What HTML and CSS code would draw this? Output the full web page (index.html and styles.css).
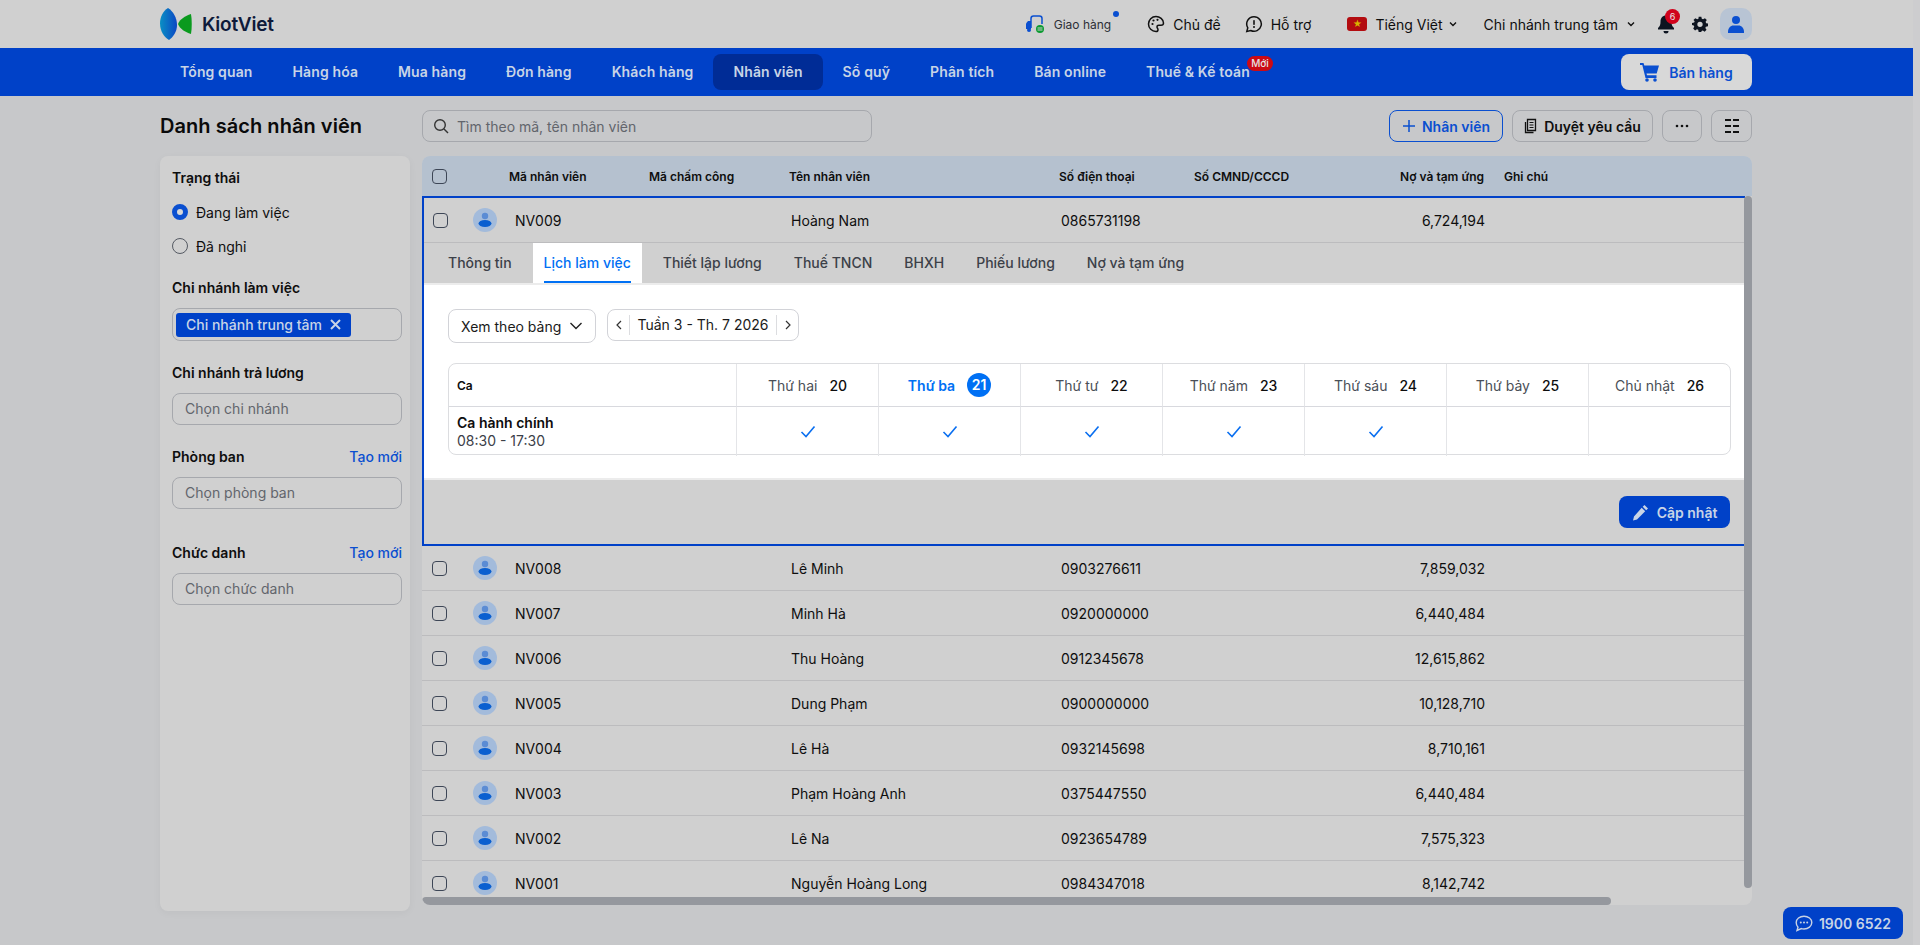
FILE: index.html
```html
<!DOCTYPE html>
<html lang="vi">
<head>
    <meta charset="UTF-8">
    <title>Danh sách nhân viên</title>
    <link rel="stylesheet" href="styles.css">
</head>
<body>
<div class="page">
    <header class="topbar">
        <div class="wrap topbar-inner">
            <a class="logo">
                <svg width="33" height="32" viewBox="0 0 33 32">
                    <defs><linearGradient id="lg" x1="0" x2="1" y1="0" y2="0"><stop offset="0" stop-color="#0a8fc4"/><stop offset="1" stop-color="#0b47c4"/></linearGradient></defs>
                    <path d="M8 0C3 3 0 9 0 15.500C0 23 4 29 9 32C13 29 17 24 17 17C17 10 13 3 8 0Z" fill="url(#lg)"/>
                    <path d="M18 16C20 11 25 8 31 6C32 12 32 20 31 26C25 24 20 21 18 16Z" fill="#0a9a1e"/>
                </svg>
                <span class="logo-text">KiotViet</span>
            </a>
            <div class="top-actions">
                <a class="top-link delivery">
                    <svg width="20" height="20" viewBox="0 0 20 20" fill="none"><path d="M6 14V4.500A2.500 2.500 0 0 1 8.500 2h6A2.500 2.500 0 0 1 17 4.500V10" stroke="#0a4fd0" stroke-width="1.500"/><path d="M1 15V9.500L3 7h3v8H1Z" fill="#0a4fd0"/><circle cx="4" cy="16" r="2" fill="#0a4fd0"/><circle cx="15" cy="15" r="4" fill="#0a9a30"/><rect x="12.500" y="13.500" width="5" height="1" fill="#d0d0d0"/><rect x="12.500" y="15.500" width="5" height="1" fill="#d0d0d0"/></svg>
                    <span>Giao hàng</span><i class="dot"></i>
                </a>
                <a class="top-link theme">
                    <svg width="18" height="18" viewBox="0 0 18 18" fill="none"><path d="M9 1.500C4.800 1.500 1.500 4.800 1.500 9S4.800 16.500 9 16.500c1.300 0 2-.8 2-1.800 0-1.300-1-1.500-1-2.700 0-1 .8-1.700 1.800-1.700h2.200c1.500 0 2.500-1 2.500-2.300 0-3.600-3.800-6.500-7.500-6.500Z" stroke="#111" stroke-width="1.500"/><circle cx="5.500" cy="9" r="1.100" fill="#111"/><circle cx="6.500" cy="5.500" r="1.100" fill="#111"/><circle cx="10.500" cy="4.800" r="1.100" fill="#111"/></svg>
                    <span>Chủ đề</span>
                </a>
                <a class="top-link support">
                    <svg width="18" height="18" viewBox="0 0 18 18" fill="none"><path d="M9 1.700a7.300 7.300 0 1 1-3.300 13.800L1.800 16.400l1-3.600A7.300 7.300 0 0 1 9 1.700Z" stroke="#111" stroke-width="1.500"/><rect x="8.200" y="5" width="1.600" height="5" rx=".8" fill="#111"/><circle cx="9" cy="12" r="1" fill="#111"/></svg>
                    <span>Hỗ trợ</span>
                </a>
                <a class="top-link lang">
                    <span class="flag">★</span>
                    <span>Tiếng Việt</span>
                    <svg class="caret" width="8" height="6" viewBox="0 0 8 6" fill="none"><path d="M1 1.500l3 3 3-3" stroke="#111" stroke-width="1.400"/></svg>
                </a>
                <a class="top-link branch">
                    <span>Chi nhánh trung tâm</span>
                    <svg class="caret" width="8" height="6" viewBox="0 0 8 6" fill="none"><path d="M1 1.500l3 3 3-3" stroke="#111" stroke-width="1.400"/></svg>
                </a>
                <a class="bell">
                    <svg width="20" height="22" viewBox="0 0 20 22"><path d="M10 2.500c-3.500 0-5.500 2.700-5.500 6 0 3.500-.7 5-2.500 6.500v1.500h16V15c-1.800-1.500-2.500-3-2.500-6.500 0-3.300-2-6-5.500-6Z" fill="#0d1420"/><path d="M7.500 18h5a2.500 2.500 0 0 1-5 0Z" fill="#0d1420"/></svg>
                    <span class="bell-count">6</span>
                </a>
                <a class="gear">
                    <svg width="16" height="16" viewBox="0 0 24 24"><path fill-rule="evenodd" d="M10 1h4l.7 3.200 1.900.8L19.400 3.200l2.800 2.800-1.800 2.800.8 1.900L24 11.400v4l-3.200.7-.8 1.900 1.800 2.800-2.800 2.800-2.800-1.800-1.900.8L14 24h-4l-.7-3.400-1.900-.8-2.800 1.800-2.800-2.800L3.400 16l-.8-1.900L0 13.400v-3l3.200-.7.800-1.900L2.200 6 5 3.200 7.800 5l1.900-.8L10 1Zm2 7.500a4 4 0 1 0 0 8 4 4 0 0 0 0-8Z" fill="#0d1420"/></svg>
                </a>
                <a class="user-btn">
                    <svg width="16" height="18" viewBox="0 0 16 18"><circle cx="8" cy="5" r="4" fill="#0a4fd0"/><path d="M0 17c0-4 2.500-6.500 5.500-6.500h5c3 0 5.500 2.500 5.500 6.500v1H0v-1Z" fill="#0a4fd0"/></svg>
                </a>
            </div>
        </div>
    </header>

    <nav class="mainnav">
        <div class="wrap mainnav-inner">
            <div class="nav-items">
                <a class="nav-item">Tổng quan</a>
                <a class="nav-item">Hàng hóa</a>
                <a class="nav-item">Mua hàng</a>
                <a class="nav-item">Đơn hàng</a>
                <a class="nav-item">Khách hàng</a>
                <a class="nav-item active">Nhân viên</a>
                <a class="nav-item">Sổ quỹ</a>
                <a class="nav-item">Phân tích</a>
                <a class="nav-item">Bán online</a>
                <a class="nav-item">Thuế &amp; Kế toán<span class="new-badge">Mới</span></a>
            </div>
            <a class="sell-btn">
                <svg width="20" height="20" viewBox="0 0 20 20"><path d="M0 1h3.500l.8 2.500H19l-2.300 8H6.500l.5 1.800h9.500V16H5.500L2.300 3H0V1Z" fill="#0a4fd0"/><circle cx="7" cy="18" r="1.800" fill="#0a4fd0"/><circle cx="15" cy="18" r="1.800" fill="#0a4fd0"/></svg>
                Bán hàng
            </a>
        </div>
    </nav>

    <main class="wrap content">
        <div class="toolbar">
            <h1 class="page-title">Danh sách nhân viên</h1>
            <div class="search">
                <svg width="16" height="16" viewBox="0 0 16 16" fill="none"><circle cx="7" cy="7" r="5.300" stroke="#333" stroke-width="1.400"/><path d="M11 11l4 4" stroke="#333" stroke-width="1.400"/></svg>
                <span>Tìm theo mã, tên nhân viên</span>
            </div>
            <div class="toolbar-actions">
                <a class="btn btn-outline">
                    <svg width="14" height="14" viewBox="0 0 14 14"><path d="M7 1v12M1 7h12" stroke="#0a4fd0" stroke-width="1.500"/></svg>
                    Nhân viên
                </a>
                <a class="btn btn-request">
                    <svg width="14" height="16" viewBox="0 0 14 16" fill="none"><path d="M3.500 1.500h8v11h-8z" stroke="#111" stroke-width="1.300"/><path d="M1.500 4v10.500h8" stroke="#111" stroke-width="1.300"/><path d="M5.500 4.500h4M5.500 7h4M5.500 9.500h4" stroke="#111" stroke-width="1.100"/></svg>
                    Duyệt yêu cầu
                </a>
                <a class="btn btn-more">
                    <svg width="14" height="4" viewBox="0 0 14 4"><circle cx="2" cy="2" r="1.300" fill="#111"/><circle cx="7" cy="2" r="1.300" fill="#111"/><circle cx="12" cy="2" r="1.300" fill="#111"/></svg>
                </a>
                <a class="btn btn-cols">
                    <svg width="16" height="14" viewBox="0 0 16 14"><path d="M1 0h6v2H1zM9 0h6v2H9zM1 6h6v2H1zM9 6h6v2H9zM1 12h6v2H1zM9 12h6v2H9z" fill="#111"/></svg>
                </a>
            </div>
        </div>

        <div class="columns">
            <aside class="filters">
                <div class="filter-title">Trạng thái</div>
                <div class="radio-row"><i class="radio checked"></i>Đang làm việc</div>
                <div class="radio-row"><i class="radio"></i>Đã nghỉ</div>

                <div class="filter-title gap-first">Chi nhánh làm việc</div>
                <div class="field field-tags">
                    <span class="tag">Chi nhánh trung tâm
                        <svg width="11" height="11" viewBox="0 0 11 11"><path d="M1 1l9 9M10 1L1 10" stroke="#c8d4e6" stroke-width="2"/></svg>
                    </span>
                </div>

                <div class="filter-title gap-next">Chi nhánh trả lương</div>
                <div class="field">Chọn chi nhánh</div>

                <div class="filter-title gap-next">Phòng ban<a class="create-link">Tạo mới</a></div>
                <div class="field">Chọn phòng ban</div>

                <div class="filter-title gap-last">Chức danh<a class="create-link">Tạo mới</a></div>
                <div class="field">Chọn chức danh</div>
            </aside>

            <section class="table">
                <div class="thead">
                    <span class="cb-cell"><i class="checkbox"></i></span>
                    <span>Mã nhân viên</span>
                    <span>Mã chấm công</span>
                    <span>Tên nhân viên</span>
                    <span>Số điện thoại</span>
                    <span>Số CMND/CCCD</span>
                    <span class="num">Nợ và tạm ứng</span>
                    <span class="note">Ghi chú</span>
                </div>

                <div class="selected">
                    <div class="row open" id="openRow"></div>
                    <div class="tabs">
                        <a class="tab">Thông tin</a>
                        <a class="tab active">Lịch làm việc</a>
                        <a class="tab">Thiết lập lương</a>
                        <a class="tab">Thuế TNCN</a>
                        <a class="tab">BHXH</a>
                        <a class="tab">Phiếu lương</a>
                        <a class="tab">Nợ và tạm ứng</a>
                    </div>
                    <div class="tab-panel">
                        <div class="schedule-tools">
                            <div class="view-select">Xem theo bảng
                                <svg width="14" height="8" viewBox="0 0 14 8" fill="none"><path d="M1.500 1l5.500 5.500L12.500 1" stroke="#222" stroke-width="1.400"/></svg>
                            </div>
                            <div class="week">
                                <span class="week-arrow"><svg width="6" height="10" viewBox="0 0 6 10" fill="none"><path d="M5 1L1 5l4 4" stroke="#333" stroke-width="1.200"/></svg></span>
                                <span class="week-label">Tuần 3 - Th. 7 2026</span>
                                <span class="week-arrow"><svg width="6" height="10" viewBox="0 0 6 10" fill="none"><path d="M1 1l4 4-4 4" stroke="#333" stroke-width="1.200"/></svg></span>
                            </div>
                        </div>
                        <div class="schedule" id="schedule"></div>
                    </div>
                    <div class="panel-foot">
                        <a class="save-btn">
                            <svg width="17" height="17" viewBox="0 0 17 17"><path d="M12.500 1l3.500 3.500-1.800 1.800-3.500-3.500L12.500 1ZM9.700 3.800l3.500 3.500L5 15.500 1 16.500l1-4 7.700-8.700Z" fill="#c8d4e6"/></svg>
                            Cập nhật
                        </a>
                    </div>
                </div>

                <div id="rows"></div>

                <i class="scroll-v"></i>
                <i class="scroll-h"></i>
            </section>
        </div>
    </main>

    <a class="hotline">
        <svg width="18" height="17" viewBox="0 0 18 17" fill="none"><path d="M9 1.200c4.300 0 7.800 2.800 7.800 6.400S13.300 14 9 14c-.9 0-1.800-.1-2.600-.4L2 15.500l1-3.300C1.900 11 1.200 9.400 1.200 7.600 1.200 4 4.700 1.200 9 1.200Z" stroke="#c8d2e4" stroke-width="1.400"/><circle cx="5.800" cy="7.600" r="1" fill="#c8d2e4"/><circle cx="9" cy="7.600" r="1" fill="#c8d2e4"/><circle cx="12.200" cy="7.600" r="1" fill="#c8d2e4"/></svg>
        1900 6522
    </a>
</div>

<script src="app.js"></script>
</body>
</html>
```

FILE: app.js
```js
const employees = [
    ['NV008', 'Lê Minh', '0903276611', '7,859,032'],
    ['NV007', 'Minh Hà', '0920000000', '6,440,484'],
    ['NV006', 'Thu Hoàng', '0912345678', '12,615,862'],
    ['NV005', 'Dung Phạm', '0900000000', '10,128,710'],
    ['NV004', 'Lê Hà', '0932145698', '8,710,161'],
    ['NV003', 'Phạm Hoàng Anh', '0375447550', '6,440,484'],
    ['NV002', 'Lê Na', '0923654789', '7,575,323'],
    ['NV001', 'Nguyễn Hoàng Long', '0984347018', '8,142,742']
];

const days = [
    ['Thứ hai', 20, true],
    ['Thứ ba', 21, true],
    ['Thứ tư', 22, true],
    ['Thứ năm', 23, true],
    ['Thứ sáu', 24, true],
    ['Thứ bảy', 25, false],
    ['Chủ nhật', 26, false]
];

const avatar = `<svg class="avatar" width="24" height="24" viewBox="0 0 24 24"><circle cx="12" cy="12" r="12" fill="#a3bbdb"/><circle cx="12" cy="8" r="3.200" fill="#5b8cd4"/><ellipse cx="12" cy="15.500" rx="6.500" ry="3.500" fill="#0a5fd0"/></svg>`;
const check = `<svg width="16" height="13" viewBox="0 0 16 13" fill="none"><path d="M1.500 7l4.500 4.500L14.500 1.500" stroke="#0a6ff0" stroke-width="1.600"/></svg>`;

function rowCells(e) {
    return `<span class="cb-cell"><i class="checkbox"></i></span>
        <span>${avatar}</span>
        <span>${e[0]}</span>
        <span></span>
        <span>${e[1]}</span>
        <span>${e[2]}</span>
        <span></span>
        <span class="num">${e[3]}</span>`;
}

document.getElementById('openRow').innerHTML = rowCells(['NV009', 'Hoàng Nam', '0865731198', '6,724,194']);

document.getElementById('rows').innerHTML = employees
    .map(e => `<div class="row">${rowCells(e)}</div>`)
    .join('');

let head = '<div class="sch-cell sch-ca">Ca</div>';
let body = '<div class="sch-cell sch-shift"><b>Ca hành chính</b><span>08:30 - 17:30</span></div>';
days.forEach(d => {
    const today = d[1] === 21 ? ' today' : '';
    head += `<div class="sch-cell sch-day${today}"><span class="day-name">${d[0]}</span><span class="day-num">${d[1]}</span></div>`;
    body += `<div class="sch-cell sch-mark">${d[2] ? check : ''}</div>`;
});
document.getElementById('schedule').innerHTML = head + body;
```

FILE: styles.css
```css
* {
    box-sizing: border-box;
}
html, body {
    height: 100%;
    margin: 0;
    overflow: hidden;
}
body {
    font-family: Inter, "Noto Sans", sans-serif;
    font-size: 14px;
    color: #0e0e0e;
    background-color: #cdcdcf;
}
a {
    color: inherit;
    text-decoration: none;
}
i {
    display: block;
}
.page {
    position: relative;
    width: 1913px;
    height: 945px;
    background-color: #c7c8ca;
}
.wrap {
    width: 1592px;
    margin-left: 160px;
}

/* top bar */
.topbar {
    height: 48px;
    background-color: #d0d0d0;
}
.topbar-inner {
    display: flex;
    align-items: center;
    justify-content: space-between;
    height: 48px;
}
.logo {
    display: flex;
    align-items: center;
    gap: 9px;
}
.logo-text {
    font-size: 19px;
    font-weight: 600;
    color: #0e1a3a;
    letter-spacing: -0.2px;
}
.top-actions {
    display: flex;
    align-items: center;
    height: 48px;
}
.top-link {
    display: flex;
    align-items: center;
    gap: 8px;
}
.delivery {
    position: relative;
    gap: 9px;
    font-size: 12px;
    color: #2c2f36;
    margin-right: 36px;
}
.delivery .dot {
    position: absolute;
    right: -8px;
    top: -3px;
    width: 6px;
    height: 6px;
    border-radius: 50%;
    background-color: #0a4fd0;
}
.theme {
    margin-right: 24px;
}
.support {
    margin-right: 36px;
}
.flag {
    width: 20px;
    height: 14px;
    border-radius: 3px;
    background-color: #b30c10;
    color: #d8b400;
    font-size: 9px;
    line-height: 14px;
    text-align: center;
}
.lang {
    margin-right: 27px;
}
.lang .caret {
    margin-left: -2px;
}
.branch .caret {
    margin-left: 1px;
}
.branch {
    margin-right: 21px;
}
.bell {
    position: relative;
    display: flex;
    margin-right: 16px;
}
.bell-count {
    position: absolute;
    left: 9px;
    top: -4px;
    width: 15px;
    height: 15px;
    border-radius: 50%;
    background-color: #d0021b;
    color: #e8e8e8;
    font-size: 9px;
    line-height: 15px;
    text-align: center;
}
.gear {
    display: flex;
    margin-right: 12px;
}
.user-btn {
    display: flex;
    align-items: center;
    justify-content: center;
    width: 32px;
    height: 32px;
    border-radius: 10px;
    background-color: #b8c4d4;
}

/* main nav */
.mainnav {
    height: 48px;
    background-color: #0041c8;
}
.mainnav-inner {
    display: flex;
    align-items: center;
    justify-content: space-between;
    height: 48px;
}
.nav-items {
    display: flex;
}
.nav-item {
    position: relative;
    height: 36px;
    padding: 0 20px;
    border-radius: 8px;
    font-weight: 600;
    line-height: 36px;
    letter-spacing: 0.12px;
    color: #c8d4e6;
}
.nav-item.active {
    background-color: #002c96;
}
.new-badge {
    position: absolute;
    right: -3px;
    top: 2px;
    height: 15px;
    padding: 0 4px;
    border-radius: 8px;
    background-color: #cc0a14;
    color: #e4e4e4;
    font-size: 10px;
    font-weight: 500;
    line-height: 15px;
    letter-spacing: 0;
}
.sell-btn {
    display: flex;
    align-items: center;
    justify-content: center;
    gap: 9px;
    width: 131px;
    height: 36px;
    border-radius: 8px;
    background-color: #d8d8d8;
    color: #0a4fd0;
    font-weight: 600;
}

/* toolbar */
.toolbar {
    display: flex;
    align-items: center;
    height: 32px;
    margin-top: 14px;
}
.page-title {
    width: 262px;
    margin: 0;
    font-size: 20px;
    font-weight: 600;
    letter-spacing: 0.05px;
    color: #0a0a0a;
}
.search {
    display: flex;
    align-items: center;
    gap: 8px;
    width: 450px;
    height: 32px;
    padding: 0 10px;
    border: 1px solid #a6a8ad;
    border-radius: 8px;
    color: #62656c;
}
.toolbar-actions {
    display: flex;
    gap: 9px;
    margin-left: auto;
}
.btn {
    display: flex;
    align-items: center;
    justify-content: center;
    gap: 6px;
    height: 32px;
    border: 1px solid #a6a8ad;
    border-radius: 8px;
    font-weight: 600;
}
.btn-outline {
    width: 114px;
    border-color: #0a4fd0;
    color: #0a4fd0;
}
.btn-request {
    width: 141px;
}
.btn-more {
    width: 40px;
}
.btn-cols {
    width: 41px;
}

/* filters + table */
.columns {
    display: flex;
    gap: 12px;
    margin-top: 14px;
    align-items: flex-start;
}
.filters {
    width: 250px;
    height: 755px;
    padding: 12px 8px 12px 12px;
    border-radius: 8px;
    background-color: #d0d0d0;
    box-shadow: 0 2px 8px rgba(0,0,0,0.04);
}
.filter-title {
    display: flex;
    justify-content: space-between;
    height: 20px;
    font-weight: 600;
    line-height: 20px;
}
.gap-first {
    margin-top: 15px;
}
.gap-next {
    margin-top: 22px;
}
.gap-last {
    margin-top: 34px;
}
.create-link {
    color: #0a4fd0;
    font-weight: 500;
}
.radio-row {
    display: flex;
    align-items: center;
    gap: 8px;
    height: 34px;
}
.filter-title + .radio-row {
    margin-top: 7px;
}
.radio {
    width: 16px;
    height: 16px;
    border: 1.500px solid #555a63;
    border-radius: 50%;
}
.radio.checked {
    border: 5px solid #0a4fd0;
    background-color: #d8d8d8;
}
.field {
    height: 32px;
    margin-top: 10px;
    padding: 0 12px;
    border: 1px solid #a6a8ad;
    border-radius: 8px;
    color: #62656c;
    line-height: 30px;
}
.field-tags {
    display: flex;
    align-items: center;
    height: 33px;
    padding: 0 3px;
}
.tag {
    display: flex;
    align-items: center;
    gap: 8px;
    height: 24px;
    padding: 0 10px;
    border-radius: 3px;
    background-color: #0041c8;
    color: #c8d4e6;
    font-weight: 500;
}
.table {
    position: relative;
    width: 1330px;
    height: 749px;
    overflow: hidden;
    border-radius: 8px;
    background-color: #d0d0d0;
}
.thead {
    display: grid;
    grid-template-columns: 87px 140px 140px 270px 135px 140px 150px 20px auto;
    align-items: center;
    height: 40px;
    background-color: #b5c1cf;
    font-size: 12px;
    font-weight: 600;
}
.thead .note {
    grid-column: 9;
}
.cb-cell {
    padding-left: 10px;
}
.checkbox {
    width: 15px;
    height: 15px;
    border: 1.300px solid #3d4656;
    border-radius: 4px;
}
.num {
    text-align: right;
}
.row {
    display: grid;
    grid-template-columns: 51px 42px 134px 142px 270px 135px 140px 149px;
    align-items: center;
    height: 45px;
    border-bottom: 1px solid #bcbcbe;
    width: 1322px;
}
.row .avatar {
    display: block;
}
.selected {
    width: 1323px;
    height: 350px;
    border-top: 2px solid #0041c8;
    border-bottom: 2px solid #0041c8;
    border-left: 2px solid #0041c8;
}
.row.open {
    grid-template-columns: 49px 42px 134px 142px 270px 135px 140px 149px;
    height: 45px;
    width: auto;
}
.row.open .cb-cell {
    padding-left: 9px;
}
.tabs {
    display: flex;
    gap: 10px;
    height: 40px;
    padding-left: 13px;
}
.tab {
    padding: 0 11px;
    color: #3c4048;
    font-weight: 500;
    line-height: 40px;
}
.tab.active {
    position: relative;
    background-color: #fff;
    color: #0070f4;
}
.tab.active::after {
    content: "";
    position: absolute;
    left: 11px;
    right: 11px;
    bottom: 0;
    height: 2px;
    background-color: #0070f4;
}
.tab-panel {
    height: 197px;
    padding: 24px 15px 0 24px;
    border-top: 2px solid #ececec;
    border-bottom: 2px solid #ececec;
    background-color: #fff;
}
.schedule-tools {
    display: flex;
    gap: 11px;
    align-items: flex-start;
    height: 54px;
}
.view-select {
    display: flex;
    align-items: center;
    justify-content: space-between;
    width: 148px;
    height: 34px;
    padding: 0 12px;
    border: 1px solid #d2d3d8;
    border-radius: 8px;
    color: #1a1a1a;
}
.week {
    display: flex;
    align-items: center;
    width: 192px;
    height: 32px;
    border: 1px solid #d2d3d8;
    border-radius: 8px;
}
.week-arrow {
    display: flex;
    align-items: center;
    justify-content: center;
    width: 21px;
    height: 20px;
}
.week-label {
    flex: 1;
    height: 20px;
    border-left: 1px solid #dcdde0;
    border-right: 1px solid #dcdde0;
    color: #1a1a1a;
    line-height: 20px;
    text-align: center;
}
.schedule {
    display: grid;
    grid-template-columns: 287px repeat(7, 142px);
    grid-template-rows: 43px 49px;
    width: 1283px;
    height: 92px;
    border: 1px solid #dcdde0;
    border-radius: 8px;
}
.sch-cell {
    display: flex;
    align-items: center;
    justify-content: center;
    border-left: 1px solid #e4e5e8;
}
.sch-ca, .sch-shift {
    border-left: none;
    padding-left: 8px;
}
.sch-ca {
    justify-content: flex-start;
    font-size: 12px;
    font-weight: 600;
}
.sch-ca, .sch-day {
    border-bottom: 1px solid #d8d9de;
}
.sch-shift {
    flex-direction: column;
    align-items: flex-start;
    line-height: 18px;
}
.sch-shift b {
    font-weight: 600;
}
.sch-shift span {
    color: #3c4048;
}
.sch-day {
    gap: 12px;
}
.day-name {
    color: #4a4f57;
}
.day-num {
    font-weight: 500;
}
.today .day-name {
    color: #0070f4;
    font-weight: 600;
}
.today .day-num {
    width: 24px;
    height: 24px;
    border-radius: 50%;
    background-color: #0070f4;
    color: #fff;
    line-height: 24px;
    text-align: center;
    font-weight: 600;
}
.panel-foot {
    display: flex;
    justify-content: flex-end;
    padding: 16px 15px 0 0;
}
.save-btn {
    display: flex;
    align-items: center;
    justify-content: center;
    gap: 8px;
    width: 111px;
    height: 32px;
    border-radius: 8px;
    background-color: #0041c8;
    color: #c8d4e6;
    font-weight: 600;
}
.scroll-v {
    position: absolute;
    right: 0;
    top: 40px;
    width: 8px;
    height: 692px;
    border-radius: 4px;
    background-color: #95989e;
}
.scroll-h {
    position: absolute;
    left: 0;
    bottom: 0;
    width: 1189px;
    height: 8px;
    border-radius: 4px;
    background-color: #95989e;
}
.hotline {
    position: absolute;
    left: 1783px;
    top: 907px;
    display: flex;
    align-items: center;
    justify-content: center;
    gap: 6px;
    width: 120px;
    height: 32px;
    border-radius: 8px;
    background-color: #0041c8;
    color: #c8d4e6;
    font-weight: 600;
}
```
